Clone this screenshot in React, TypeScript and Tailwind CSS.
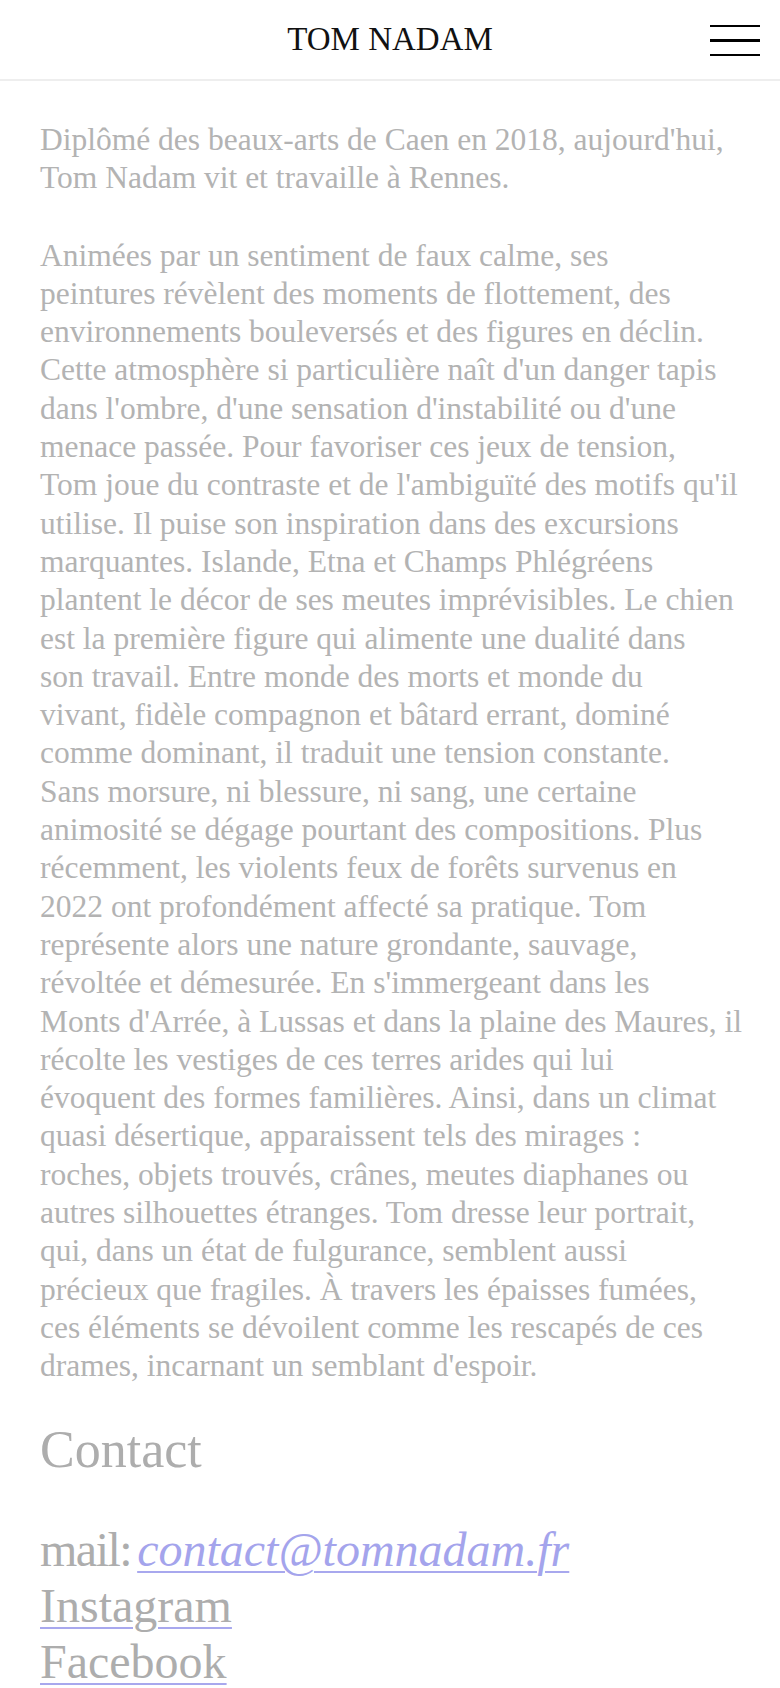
import React from "react";

const p1 = [
  "Diplômé des beaux-arts de Caen en 2018, aujourd'hui,",
  "Tom Nadam vit et travaille à Rennes.",
];

const p2 = [
  "Animées par un sentiment de faux calme, ses",
  "peintures révèlent des moments de flottement, des",
  "environnements bouleversés et des figures en déclin.",
  "Cette atmosphère si particulière naît d'un danger tapis",
  "dans l'ombre, d'une sensation d'instabilité ou d'une",
  "menace passée. Pour favoriser ces jeux de tension,",
  "Tom joue du contraste et de l'ambiguïté des motifs qu'il",
  "utilise. Il puise son inspiration dans des excursions",
  "marquantes. Islande, Etna et Champs Phlégréens",
  "plantent le décor de ses meutes imprévisibles. Le chien",
  "est la première figure qui alimente une dualité dans",
  "son travail. Entre monde des morts et monde du",
  "vivant, fidèle compagnon et bâtard errant, dominé",
  "comme dominant, il traduit une tension constante.",
  "Sans morsure, ni blessure, ni sang, une certaine",
  "animosité se dégage pourtant des compositions. Plus",
  "récemment, les violents feux de forêts survenus en",
  "2022 ont profondément affecté sa pratique. Tom",
  "représente alors une nature grondante, sauvage,",
  "révoltée et démesurée. En s'immergeant dans les",
  "Monts d'Arrée, à Lussas et dans la plaine des Maures, il",
  "récolte les vestiges de ces terres arides qui lui",
  "évoquent des formes familières. Ainsi, dans un climat",
  "quasi désertique, apparaissent tels des mirages :",
  "roches, objets trouvés, crânes, meutes diaphanes ou",
  "autres silhouettes étranges. Tom dresse leur portrait,",
  "qui, dans un état de fulgurance, semblent aussi",
  "précieux que fragiles. À travers les épaisses fumées,",
  "ces éléments se dévoilent comme les rescapés de ces",
  "drames, incarnant un semblant d'espoir.",
];

function Lines({ lines }: { lines: string[] }) {
  return (
    <>
      {lines.map((l, i) => (
        <React.Fragment key={i}>
          {l}
          {i < lines.length - 1 && <br />}
        </React.Fragment>
      ))}
    </>
  );
}

export default function App() {
  return (
    <div className="min-h-screen bg-white font-['Liberation_Serif','Times_New_Roman',serif]">
      <header className="grid h-[81px] grid-cols-[1fr_auto_1fr] items-center border-b-2 border-[#eeeeee]">
        <div />
        <h1 className="text-[33px] leading-none text-[#111111]">TOM NADAM</h1>
        <div className="flex justify-end pr-5">
          <button className="flex w-[50px] flex-col gap-[12px] pt-[2px]" aria-label="Menu">
            <span className="block h-[2.5px] w-full bg-black" />
            <span className="block h-[2.5px] w-full bg-black" />
            <span className="block h-[2.5px] w-full bg-black" />
          </button>
        </div>
      </header>

      <main className="px-10 pt-[40px] pb-0 text-[#b3b3b3]">
        <p className="whitespace-nowrap text-[31.5px] leading-[38.3px]">
          <Lines lines={p1} />
        </p>
        <p className="mt-[39px] whitespace-nowrap text-[31.5px] leading-[38.3px]">
          <Lines lines={p2} />
        </p>

        <h2 className="mt-[34px] text-[52px] leading-[60px] text-[#adadad]">Contact</h2>

        <div className="mt-[42px] text-[48px] leading-[56px] text-[#adadad]">
          <div className="whitespace-nowrap">
            <span className="mr-[-6px] tracking-[-1.5px]">mail:</span>{" "}
            <a
              href="#"
              className="italic text-[#a4a4ec] underline decoration-[#a8a8ee] decoration-2 underline-offset-[5px]"
            >
              contact@tomnadam.fr
            </a>
          </div>
          <div>
            <a href="#" className="underline decoration-[#a8a8ee] decoration-2 underline-offset-[5px]">
              Instagram
            </a>
          </div>
          <div>
            <a href="#" className="underline decoration-[#a8a8ee] decoration-2 underline-offset-[5px]">
              Facebook
            </a>
          </div>
        </div>
      </main>
    </div>
  );
}
